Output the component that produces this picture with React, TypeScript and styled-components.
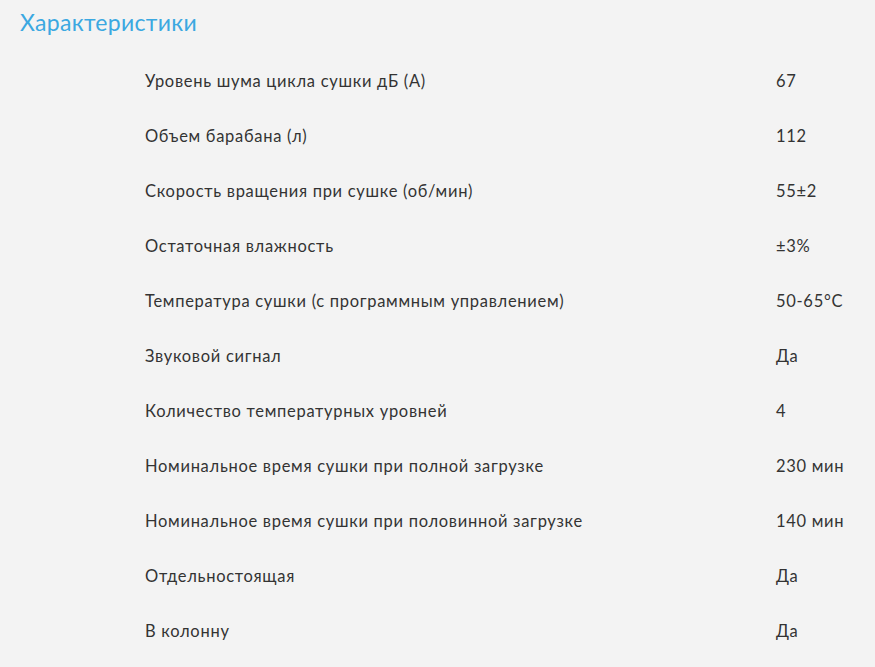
import React from "react";
import styled, { createGlobalStyle } from "styled-components";

const Global = createGlobalStyle`
  html, body { margin: 0; padding: 0; background: #f3f3f3; }
  body { font-family: "Lato", "Liberation Sans", sans-serif; }
`;

const Page = styled.div`
  background: #f3f3f3;
  min-height: 667px;
  box-sizing: border-box;
  padding: 6px 0 0 20px;
`;

const Title = styled.h2`
  margin: 0;
  font-family: "Lato", "Liberation Sans", sans-serif;
  font-weight: 400;
  font-size: 23px;
  line-height: 32px;
  letter-spacing: 0.3px;
  color: #3ba8e1;
`;

const Table = styled.div`
  display: grid;
  grid-template-columns: 631px 1fr;
  margin: 15px 0 0 125px;
`;

const Cell = styled.div`
  height: 55px;
  display: flex;
  align-items: center;
  font-size: 16.5px;
  letter-spacing: 0.7px;
  color: #333333;
  white-space: nowrap;
`;

const rows: [string, string][] = [
  ["Уровень шума цикла сушки дБ (А)", "67"],
  ["Объем барабана (л)", "112"],
  ["Скорость вращения при сушке (об/мин)", "55±2"],
  ["Остаточная влажность", "±3%"],
  ["Температура сушки (с программным управлением)", "50-65°C"],
  ["Звуковой сигнал", "Да"],
  ["Количество температурных уровней", "4"],
  ["Номинальное время сушки при полной загрузке", "230 мин"],
  ["Номинальное время сушки при половинной загрузке", "140 мин"],
  ["Отдельностоящая", "Да"],
  ["В колонну", "Да"],
];

export default function App() {
  return (
    <Page>
      <Global />
      <Title>Характеристики</Title>
      <Table>
        {rows.map(([k, v]) => (
          <React.Fragment key={k}>
            <Cell>{k}</Cell>
            <Cell>{v}</Cell>
          </React.Fragment>
        ))}
      </Table>
    </Page>
  );
}
